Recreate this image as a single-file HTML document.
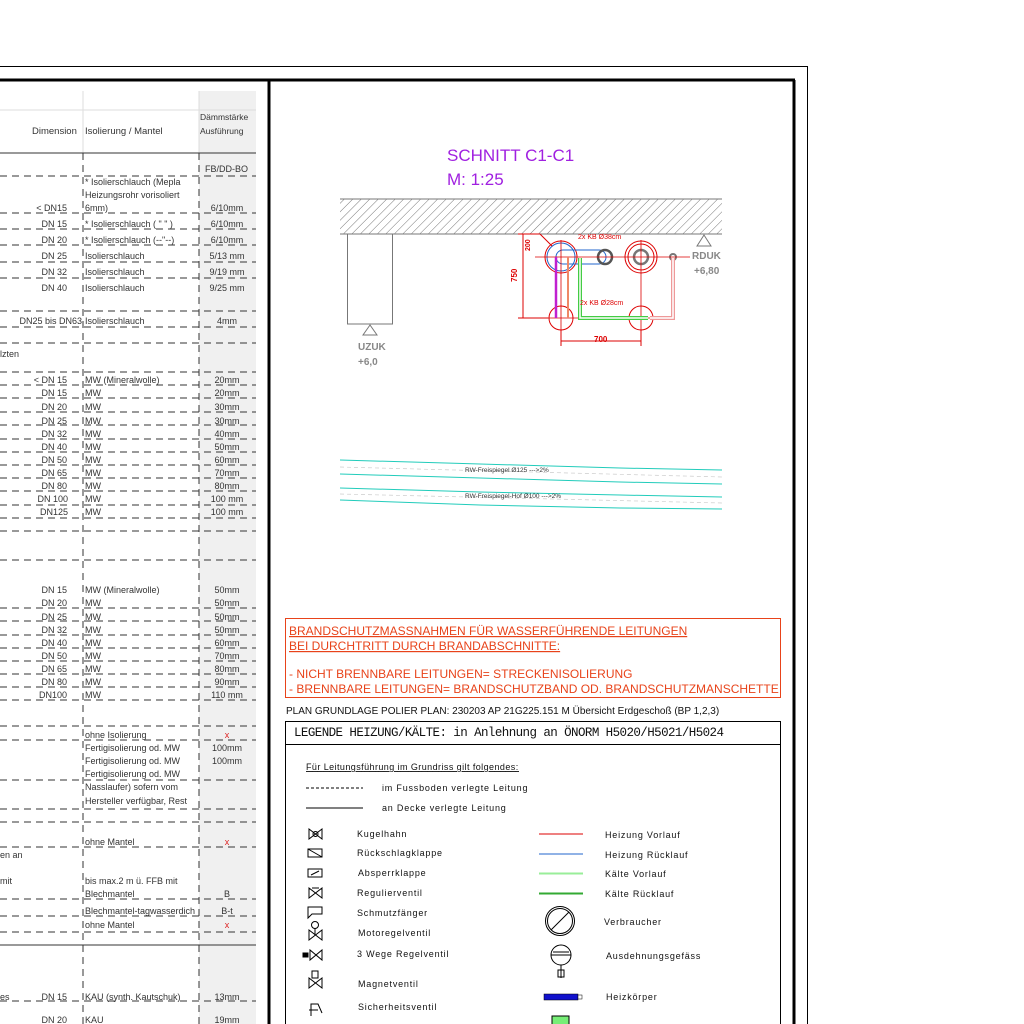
<!DOCTYPE html>
<html><head><meta charset="utf-8"><style>
html,body{margin:0;padding:0;background:#fff;width:1024px;height:1024px;overflow:hidden}
svg{display:block}
.t{font-family:"Liberation Sans",sans-serif;font-size:9px;fill:#333}
.c{font-family:"Liberation Sans",sans-serif;font-size:9px;fill:#111;letter-spacing:0.8px}
</style></head><body>
<svg width="1024" height="1024" viewBox="0 0 1024 1024" xmlns="http://www.w3.org/2000/svg">
<defs>
<pattern id="h" width="6" height="6" patternUnits="userSpaceOnUse" patternTransform="rotate(45)">
<line x1="0" y1="0" x2="0" y2="6" stroke="#777" stroke-width="1"/></pattern>
</defs>
<line x1="0" y1="66.5" x2="807" y2="66.5" stroke="#000" stroke-width="1"/>
<line x1="807.5" y1="66" x2="807.5" y2="1024" stroke="#000" stroke-width="1"/>
<line x1="0" y1="80" x2="795" y2="80" stroke="#000" stroke-width="3"/>
<line x1="269" y1="80" x2="269" y2="1024" stroke="#000" stroke-width="3"/>
<line x1="794" y1="80" x2="794" y2="1024" stroke="#000" stroke-width="3"/>
<rect x="199" y="91" width="57" height="933" fill="#f0f0f0"/>
<line x1="0" y1="110" x2="256" y2="110" stroke="#ddd"/>
<line x1="83" y1="91" x2="83" y2="153" stroke="#ddd"/>
<line x1="199" y1="91" x2="199" y2="153" stroke="#ddd"/>
<line x1="0" y1="153" x2="256" y2="153" stroke="#333"/>
<g stroke="#333" stroke-dasharray="7,5" fill="none">
<line x1="83" y1="153" x2="83" y2="1024"/>
<line x1="199" y1="153" x2="199" y2="1024"/>
<path d="M0 176H256M0 213H256M0 229H256M0 245H256M0 262H256M0 278H256M0 311H256M0 327H256M0 343H256M0 372H256M0 385H256M0 398H256M0 412H256M0 425H256M0 439H256M0 452H256M0 465H256M0 478H256M0 491H256M0 505H256M0 518H256M0 531H256M0 560H256M0 608H256M0 621H256M0 635H256M0 648H256M0 661H256M0 674H256M0 687H256M0 700H256M0 726H256M0 740H256M0 780H256M0 809H256M0 822H256M0 847H256M0 899H256M0 916H256M0 932H256M0 1001H256"/>
</g>
<line x1="0" y1="945" x2="256" y2="945" stroke="#333"/>
<text class="t" x="32" y="134" style="font-size:9.5px">Dimension</text>
<text class="t" x="85" y="134" style="font-size:9.5px">Isolierung / Mantel</text>
<text class="t" x="200" y="120" style="font-size:8.5px">Dämmstärke</text>
<text class="t" x="200" y="134" style="font-size:8.5px">Ausführung</text>
<g class="t">
<text x="205" y="172">FB/DD-BO</text>
<text x="85" y="185">* Isolierschlauch (Mepla</text>
<text x="85" y="198">Heizungsrohr vorisoliert</text>
<text x="85" y="211">6mm)</text>
<text x="85" y="227">* Isolierschlauch ( " " )</text>
<text x="85" y="243">* Isolierschlauch (--"--)</text>
<text x="85" y="259">Isolierschlauch</text>
<text x="85" y="275">Isolierschlauch</text>
<text x="85" y="291">Isolierschlauch</text>
<text x="85" y="324">Isolierschlauch</text>
<text x="0" y="357">lzten</text>
<text x="85" y="383">MW (Mineralwolle)</text>
<text x="85" y="396">MW</text><text x="85" y="410">MW</text><text x="85" y="424">MW</text><text x="85" y="437">MW</text><text x="85" y="450">MW</text><text x="85" y="463">MW</text><text x="85" y="476">MW</text><text x="85" y="489">MW</text><text x="85" y="502">MW</text><text x="85" y="515">MW</text>
<text x="85" y="593">MW (Mineralwolle)</text>
<text x="85" y="606">MW</text><text x="85" y="620">MW</text><text x="85" y="633">MW</text><text x="85" y="646">MW</text><text x="85" y="659">MW</text><text x="85" y="672">MW</text><text x="85" y="685">MW</text><text x="85" y="698">MW</text>
<text x="85" y="738">ohne Isolierung</text>
<text x="85" y="751">Fertigisolierung od. MW</text>
<text x="85" y="764">Fertigisolierung od. MW</text>
<text x="85" y="777">Fertigisolierung od. MW</text>
<text x="85" y="790">Nasslaufer) sofern vom</text>
<text x="85" y="804">Hersteller verfügbar, Rest</text>
<text x="85" y="845">ohne Mantel</text>
<text x="0" y="858">en an</text>
<text x="0" y="884">mit</text>
<text x="85" y="884">bis max.2 m ü. FFB mit</text>
<text x="85" y="897">Blechmantel</text>
<text x="85" y="914">Blechmantel-tagwasserdich</text>
<text x="85" y="928">ohne Mantel</text>
<text x="0" y="1000">es</text>
<text x="85" y="1000">KAU (synth. Kautschuk)</text>
<text x="85" y="1023">KAU</text>
</g>
<g class="t" text-anchor="end">
<text x="67" y="211">&lt; DN15</text><text x="67" y="227">DN 15</text><text x="67" y="243">DN 20</text><text x="67" y="259">DN 25</text><text x="67" y="275">DN 32</text><text x="67" y="291">DN 40</text><text x="82" y="324">DN25 bis DN63</text>
<text x="67" y="383">&lt; DN 15</text><text x="67" y="396">DN 15</text><text x="67" y="410">DN 20</text><text x="67" y="424">DN 25</text><text x="67" y="437">DN 32</text><text x="67" y="450">DN 40</text><text x="67" y="463">DN 50</text><text x="67" y="476">DN 65</text><text x="67" y="489">DN 80</text><text x="68" y="502">DN 100</text><text x="68" y="515">DN125</text>
<text x="67" y="593">DN 15</text><text x="67" y="606">DN 20</text><text x="67" y="620">DN 25</text><text x="67" y="633">DN 32</text><text x="67" y="646">DN 40</text><text x="67" y="659">DN 50</text><text x="67" y="672">DN 65</text><text x="67" y="685">DN 80</text><text x="67" y="698">DN100</text>
<text x="67" y="1000">DN 15</text><text x="67" y="1023">DN 20</text>
</g>
<g class="t" text-anchor="middle">
<text x="227" y="211">6/10mm</text><text x="227" y="227">6/10mm</text><text x="227" y="243">6/10mm</text><text x="227" y="259">5/13 mm</text><text x="227" y="275">9/19 mm</text><text x="227" y="291">9/25 mm</text><text x="227" y="324">4mm</text>
<text x="227" y="383">20mm</text><text x="227" y="396">20mm</text><text x="227" y="410">30mm</text><text x="227" y="424">30mm</text><text x="227" y="437">40mm</text><text x="227" y="450">50mm</text><text x="227" y="463">60mm</text><text x="227" y="476">70mm</text><text x="227" y="489">80mm</text><text x="227" y="502">100 mm</text><text x="227" y="515">100 mm</text>
<text x="227" y="593">50mm</text><text x="227" y="606">50mm</text><text x="227" y="620">50mm</text><text x="227" y="633">50mm</text><text x="227" y="646">60mm</text><text x="227" y="659">70mm</text><text x="227" y="672">80mm</text><text x="227" y="685">90mm</text><text x="227" y="698">110 mm</text>
<text x="227" y="738" fill="#d22">x</text><text x="227" y="751">100mm</text><text x="227" y="764">100mm</text>
<text x="227" y="845" fill="#d22">x</text><text x="227" y="897">B</text><text x="227" y="914">B-t</text><text x="227" y="928" fill="#d22">x</text>
<text x="227" y="1000">13mm</text><text x="227" y="1023">19mm</text>
</g>
<text x="447" y="161" font-family="Liberation Sans,sans-serif" font-size="17" fill="#a020e0">SCHNITT C1-C1</text>
<text x="447" y="185" font-family="Liberation Sans,sans-serif" font-size="17" fill="#a020e0">M: 1:25</text>
<rect x="340" y="199" width="382" height="35" fill="url(#h)" stroke="none"/>
<line x1="340" y1="199" x2="722" y2="199" stroke="#777"/>
<line x1="340" y1="234" x2="722" y2="234" stroke="#777"/>
<rect x="347.5" y="234" width="45" height="90" fill="none" stroke="#777"/>
<path d="M370 325L363 335H377Z" fill="none" stroke="#777"/>
<text x="358" y="350" font-family="Liberation Sans,sans-serif" font-size="10" font-weight="bold" fill="#888">UZUK</text>
<text x="358" y="365" font-family="Liberation Sans,sans-serif" font-size="10" font-weight="bold" fill="#888">+6,0</text>
<path d="M704 235L697 246H711Z" fill="none" stroke="#777"/>
<text x="692" y="259" font-family="Liberation Sans,sans-serif" font-size="10" font-weight="bold" fill="#888">RDUK</text>
<text x="694" y="274" font-family="Liberation Sans,sans-serif" font-size="10" font-weight="bold" fill="#888">+6,80</text>
<g fill="none">
<circle cx="561" cy="257" r="16" stroke="#d00"/><circle cx="561" cy="257" r="14" stroke="#26c"/>
<rect x="556" y="250" width="50" height="14" rx="7" stroke="#26c"/>
<circle cx="605" cy="257" r="7" stroke="#555" stroke-width="2.5"/>
<circle cx="641" cy="257" r="16" stroke="#d00"/><circle cx="641" cy="257" r="13" stroke="#d00"/>
<circle cx="641" cy="257" r="7" stroke="#777" stroke-width="2.5"/>
<circle cx="673" cy="257" r="3" stroke="#777" stroke-width="2"/>
<circle cx="561" cy="318" r="12" stroke="#d00"/><circle cx="641" cy="318" r="12" stroke="#d00"/>
<path d="M535 257H690M561 240V335M641 240V335M545 318H660" stroke="#d00" stroke-width="0.8"/>
<path d="M523 234V318M518 318H548M518 234H540M540 234L552 246" stroke="#d00"/>
<path d="M561 341H641M561 330V346M641 330V346" stroke="#d00"/>
<path d="M556 257V318" stroke="#c020d0" stroke-width="2.5"/>
<path d="M568 257V318" stroke="#e86" stroke-width="2"/>
<path d="M580 258V318H648" stroke="#4c4" stroke-width="4"/><path d="M580 258V318H648" stroke="#fff" stroke-width="1.5"/>
<path d="M650 318H673V258" stroke="#e99" stroke-width="4"/><path d="M650 318H673V258" stroke="#fff" stroke-width="1.5"/>
</g>
<text x="517" y="282" font-family="Liberation Sans,sans-serif" font-size="8" font-weight="bold" fill="#d00" transform="rotate(-90 517 282)">750</text>
<text x="530" y="251" font-family="Liberation Sans,sans-serif" font-size="7" font-weight="bold" fill="#d00" transform="rotate(-90 530 251)">200</text>
<text x="578" y="239" font-family="Liberation Sans,sans-serif" font-size="7" fill="#d00">2x KB Ø38cm</text>
<text x="580" y="305" font-family="Liberation Sans,sans-serif" font-size="7" fill="#d00">2x KB Ø28cm</text>
<text x="594" y="342" font-family="Liberation Sans,sans-serif" font-size="8" font-weight="bold" fill="#d00">700</text>
<g fill="none" stroke="#2cb" stroke-width="1">
<path d="M340 460L480 464L620 468L722 470"/><path d="M340 474L480 478L620 482L722 484"/>
<path d="M340 488L480 492L620 495L722 497"/><path d="M340 500L480 505L620 508L722 509"/>
</g>
<g fill="none" stroke="#ccc" stroke-width="0.7" stroke-dasharray="4,3"><path d="M340 467L722 477"/><path d="M340 494L722 503"/></g>
<text x="465" y="472" font-family="Liberation Sans,sans-serif" font-size="6.5" fill="#333">RW-Freispiegel Ø125 ---&gt;2%</text>
<text x="465" y="498" font-family="Liberation Sans,sans-serif" font-size="6.5" fill="#333">RW-Freispiegel-Hof Ø100 ---&gt;2%</text>
<rect x="285.5" y="618.5" width="495" height="79" fill="none" stroke="#e8431a"/>
<g font-family="Liberation Sans,sans-serif" font-size="12" fill="#e8431a" text-decoration="underline">
<text x="289" y="635">BRANDSCHUTZMASSNAHMEN FÜR WASSERFÜHRENDE LEITUNGEN</text>
<text x="289" y="650">BEI DURCHTRITT DURCH BRANDABSCHNITTE:</text></g>
<g font-family="Liberation Sans,sans-serif" font-size="12" fill="#e8431a">
<text x="289" y="678">- NICHT BRENNBARE LEITUNGEN= STRECKENISOLIERUNG</text>
<text x="289" y="693">- BRENNBARE LEITUNGEN= BRANDSCHUTZBAND OD. BRANDSCHUTZMANSCHETTE</text></g>
<text x="286" y="714" font-family="Liberation Sans,sans-serif" font-size="10" fill="#111">PLAN GRUNDLAGE POLIER PLAN:  230203 AP 21G225.151 M Übersicht Erdgeschoß (BP 1,2,3)</text>
<rect x="285.5" y="721.5" width="495" height="310" fill="none" stroke="#000"/>
<line x1="285" y1="744.5" x2="780" y2="744.5" stroke="#000"/>
<text x="294" y="736" font-family="Liberation Mono,monospace" font-size="12.5" fill="#111" textLength="430">LEGENDE HEIZUNG/KÄLTE: in Anlehnung an ÖNORM H5020/H5021/H5024</text>
<g class="c">
<text x="306" y="770" text-decoration="underline" textLength="213">Für Leitungsführung im Grundriss gilt folgendes:</text>
<text x="382" y="791">im Fussboden verlegte Leitung</text>
<text x="382" y="811">an Decke verlegte Leitung</text>
<text x="357" y="837">Kugelhahn</text><text x="357" y="856">Rückschlagklappe</text><text x="358" y="876">Absperrklappe</text>
<text x="357" y="896">Regulierventil</text><text x="357" y="916">Schmutzfänger</text><text x="358" y="936">Motoregelventil</text>
<text x="357" y="957">3 Wege Regelventil</text><text x="358" y="987">Magnetventil</text><text x="358" y="1010">Sicherheitsventil</text>
<text x="605" y="838">Heizung Vorlauf</text><text x="605" y="858">Heizung Rücklauf</text><text x="605" y="877">Kälte Vorlauf</text><text x="605" y="897">Kälte Rücklauf</text>
<text x="604" y="925">Verbraucher</text><text x="606" y="959">Ausdehnungsgefäss</text><text x="606" y="1000">Heizkörper</text>
</g>
<line x1="306" y1="788" x2="363" y2="788" stroke="#000" stroke-dasharray="3,2"/>
<line x1="306" y1="808" x2="363" y2="808" stroke="#000"/>
<line x1="539" y1="834" x2="583" y2="834" stroke="#d00"/>
<line x1="539" y1="854" x2="583" y2="854" stroke="#26c"/>
<line x1="539" y1="873.5" x2="583" y2="873.5" stroke="#9e9" stroke-width="2"/>
<line x1="539" y1="893.5" x2="583" y2="893.5" stroke="#3a3" stroke-width="2"/>
<g fill="none" stroke="#000" stroke-width="1">
<path d="M309 829V839L322 829V839Z"/><circle cx="315.5" cy="834" r="2.5"/>
<rect x="308" y="849" width="14" height="8"/><path d="M308 849L322 857"/>
<rect x="308" y="869" width="14" height="8"/><path d="M311 875L319 871"/>
<path d="M309 888V898L322 888V898Z"/><path d="M312 888L319 888"/>
<path d="M308 907H322V914H312L308 918Z"/>
<path d="M309 930V940L322 930V940Z"/><circle cx="315" cy="925" r="3.5"/><path d="M315 928V935"/>
<path d="M310 950V960L322 950V960Z"/><rect x="303" y="953" width="5" height="4" fill="#000"/>
<path d="M309 978V988L322 978V988Z"/><rect x="312" y="971" width="6" height="7"/>
<path d="M311 1016V1004H318L322 1013M309 1010H318"/>
<circle cx="560" cy="921" r="14.5"/><circle cx="560" cy="921" r="12.5"/><path d="M551 930L569 912"/>
<circle cx="561" cy="955" r="10"/><path d="M551 955H571M553 952H569M561 965V978"/><rect x="558" y="970" width="6" height="7"/>
</g>
<rect x="544" y="994" width="34" height="6" fill="#11c" stroke="#000" stroke-width="0.5"/>
<rect x="578" y="995" width="4" height="4" fill="#fff" stroke="#000" stroke-width="0.5"/>
<rect x="552" y="1016" width="17" height="10" fill="#7e7" stroke="#000"/>
</svg>
</body></html>
